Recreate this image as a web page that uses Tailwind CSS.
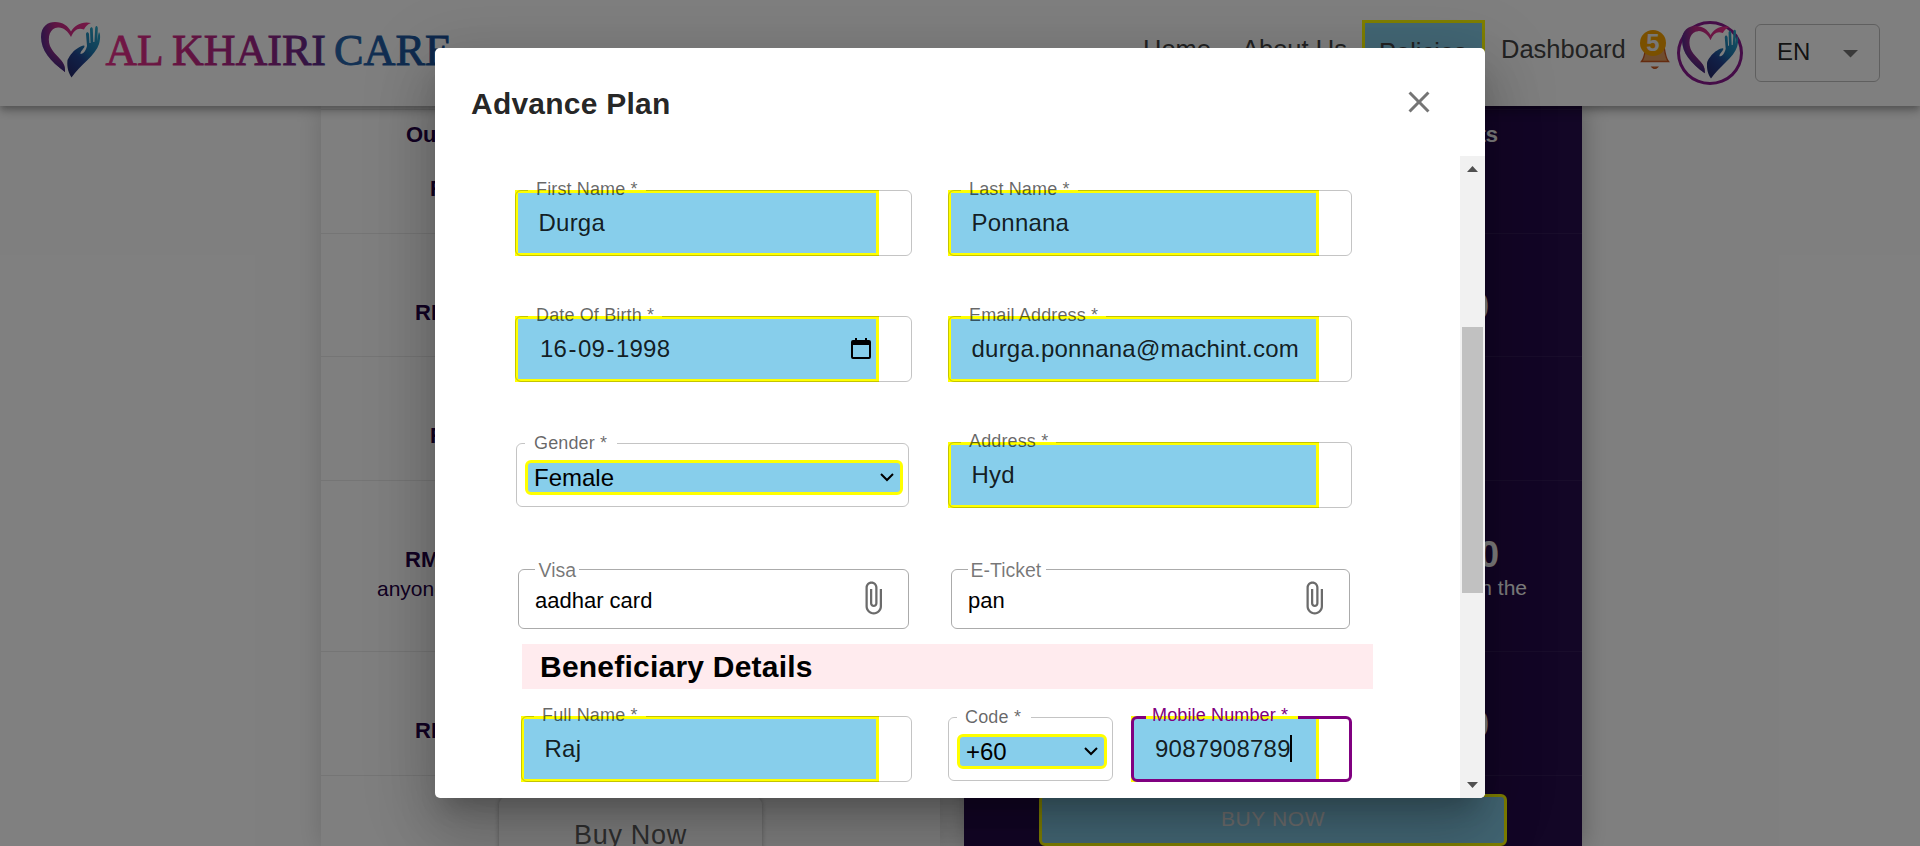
<!DOCTYPE html>
<html lang="en">
<head>
<meta charset="utf-8">
<title>Al Khairi Care</title>
<script src="https://cdn.jsdelivr.net/npm/@tailwindcss/browser@4"></script>
</head>
<body class="relative h-[846px] w-[1920px] overflow-hidden bg-white font-['Liberation_Sans',Arial,sans-serif]">

<svg class="absolute size-0" aria-hidden="true">
  <defs>
    <linearGradient id="heart" x1="0" y1="0.2" x2="1" y2="0.1">
      <stop offset="0" stop-color="#5a2a8c"/><stop offset=".3" stop-color="#c02a86"/><stop offset="1" stop-color="#f0308c"/>
    </linearGradient>
    <linearGradient id="heartlow" x1="0" y1="0" x2="0" y2="1">
      <stop offset=".45" stop-color="#3a2a86" stop-opacity="0"/><stop offset="1" stop-color="#2c2a7c"/>
    </linearGradient>
    <linearGradient id="hand" x1=".8" y1="0" x2=".2" y2="1">
      <stop offset="0" stop-color="#2aa6c8"/><stop offset=".4" stop-color="#1d78b0"/><stop offset=".65" stop-color="#22418f"/><stop offset="1" stop-color="#242a6c"/>
    </linearGradient>
    <linearGradient id="word" gradientUnits="userSpaceOnUse" x1="0" y1="0" x2="350" y2="0">
      <stop offset="0" stop-color="#e8308c"/><stop offset=".2" stop-color="#cf2882"/><stop offset=".45" stop-color="#9c2486"/><stop offset=".63" stop-color="#5a2a86"/><stop offset=".65" stop-color="#2a66ac"/><stop offset="1" stop-color="#1c4f98"/>
    </linearGradient>
    <symbol id="mark" viewBox="41 21 60 57" preserveAspectRatio="none">
      <path fill="url(#heart)" d="M65 72C50 61 41 50 41 37 41 26 48 22 55 22 63 22 68 26 71 31.500 75 25 82 21 91 23 87 24.500 85 27 84 29.500 78 27 74 30 71 37 68 31 63 27 58 27.500 50 28 47 37 50 46 53 53 60 58 63 63 65 66 65 69 65 72Z"/>
      <path fill="url(#heartlow)" d="M65 72C50 61 41 50 41 37 41 26 48 22 55 22 63 22 68 26 71 31.500 75 25 82 21 91 23 87 24.500 85 27 84 29.500 78 27 74 30 71 37 68 31 63 27 58 27.500 50 28 47 37 50 46 53 53 60 58 63 63 65 66 65 69 65 72Z"/>
      <path fill="url(#hand)" d="M71.500 77.500C67 71 67 64 67.500 60 70 55 74 50 78 48 81 46 84 45 84.500 46 85 48 80 51 80.500 54 84 54 86 50 87 46L86 34C86.300 31.500 88.500 31.500 89 34L89.500 43 90.500 43 90 29C90.500 26.500 92.600 26.500 92.800 29L93.300 42 94.400 42 95.200 28C95.700 25 97.800 25.500 97.800 28.500L97.300 41C98 37 98 34 99 32 100.500 34 100.500 39 99 44 96 55 80 65 71.500 77.500Z"/>
    </symbol>
    <symbol id="clip" viewBox="0 0 24 24">
      <path d="M16.500 6v11.500c0 2.210-1.790 4-4 4s-4-1.790-4-4V5c0-1.380 1.120-2.500 2.500-2.500s2.500 1.120 2.500 2.500v10.500c0 .55-.45 1-1 1s-1-.45-1-1V6H10v9.500c0 1.380 1.120 2.500 2.500 2.500s2.500-1.120 2.500-2.500V5c0-2.210-1.790-4-4-4S7 2.790 7 5v12.500c0 3.040 2.460 5.500 5.500 5.500s5.500-2.460 5.500-5.500V6h-1.500z"/>
    </symbol>
  </defs>
</svg>

<!-- Site header -->
<header class="relative z-10 flex h-[106px] items-start bg-white shadow-[0_3px_6px_-1px_rgba(0,0,0,0.2),0_6px_8px_0_rgba(0,0,0,0.14),0_2px_15px_0_rgba(0,0,0,0.12)]">
  <div class="flex pt-[21px] pl-[41px]">
    <svg class="h-[57px] w-[60px]"><use href="#mark"/></svg>
    <svg class="h-[57px] w-[360px]" viewBox="0 0 360 57" font-family="Liberation Serif" font-size="44" fill="url(#word)" stroke="url(#word)" stroke-width=".9"><text x="4.500" y="43.500" textLength="58" lengthAdjust="spacingAndGlyphs">AL</text><text x="71" y="43.500" textLength="154" lengthAdjust="spacingAndGlyphs">KHAIRI</text><text x="233" y="43.500" textLength="118" lengthAdjust="spacingAndGlyphs">CARE</text></svg>
  </div>
  <nav class="ml-[682px] flex text-[25.5px] leading-[30px] text-[#444]">
    <span class="mt-[34px] w-[99px] whitespace-nowrap">Home</span>
    <span class="mt-[34px] w-[120px] whitespace-nowrap">About Us</span>
    <span class="mt-5 h-[66px] w-[123px] border-[3px] border-[yellow] bg-[skyblue] pt-[14px] pl-[14px] whitespace-nowrap">Policies</span>
    <span class="mt-[34px] ml-4 w-[139px] whitespace-nowrap">Dashboard</span>
  </nav>
  <div class="relative mt-[30px] h-10 w-[30px]">
    <svg class="absolute inset-0" width="30" height="40" viewBox="0 0 30 40"><path d="M1.500 31.500C4.500 28 5 23 6 16H24C25 23 25.500 28 28.500 31.500Z" fill="#e09a5c" stroke="#c8561e" stroke-width="1.300"/><path d="M12 37q2.800 3 5.600 0z" fill="#e09a5c" stroke="#c8561e" stroke-width="1.200"/></svg>
    <span class="absolute top-0 left-0 flex size-[26px] items-center justify-center rounded-full bg-[#f5a000] text-[24px] font-bold text-[#eee]">5</span>
  </div>
  <div class="mt-[21px] ml-[7px] flex h-16 w-[66px] items-start justify-center rounded-[50%] border-[3px] border-[#8a1a90] bg-white pt-px">
    <svg class="h-[54px] w-[57px]"><use href="#mark"/></svg>
  </div>
  <div class="mt-6 ml-3 flex h-[58px] w-[125px] items-center justify-between rounded-[6px] border border-black/25 pr-[21px] pb-[3px] pl-[21px] text-[24px] text-black/87">
    <span>EN</span>
    <svg class="mt-1" width="15" height="8" viewBox="0 0 15 8"><path d="M0 0h15L7.500 7.500z" fill="#757575"/></svg>
  </div>
</header>

<!-- Plan comparison cards -->
<main class="flex h-[740px] gap-6 pl-[321px] text-[22px] leading-8">
  <section class="w-[619px] bg-white font-bold text-[#240046] shadow-[0_0_24px_rgba(0,0,0,0.16)]">
    <div class="h-1 border-b border-black/8"></div>
    <div class="h-[124px] border-b border-black/8 pt-[9px]"><p class="pl-[85px]">Ou</p><p class="mt-[22px] pl-[109px]">R</p></div>
    <div class="h-[123px] border-b border-black/8 pt-[63px] pl-[94px]">RM</div>
    <div class="h-[124px] border-b border-black/8 pt-[63px] pl-[109px]">R</div>
    <div class="h-[171px] border-b border-black/8 pt-16"><p class="pl-[84px] leading-[30px]">RM</p><p class="pl-14 text-[21px] leading-7 font-normal">anyone</p></div>
    <div class="h-[124px] border-b border-black/8 pt-[63px] pl-[94px]">RM</div>
    <div class="mt-5 ml-[178px] h-[60px] w-[263px] rounded-[9px] pt-[23px] text-center text-[27px] leading-8 font-normal tracking-[.7px] text-[#606060] shadow-[0_0_5px_rgba(0,0,0,0.3)]">Buy Now</div>
  </section>
  <section class="w-[618px] bg-[#260d4c] text-right font-bold text-white shadow-[0_0_24px_rgba(0,0,0,0.3)]">
    <div class="h-1 border-b border-white/6"></div>
    <div class="h-[124px] border-b border-white/6 pt-[9px] pr-[84px]">Benefits</div>
    <div class="h-[123px] border-b border-white/6 pt-[57px] pr-[93px] text-[36px]">0</div>
    <div class="h-[124px] border-b border-white/6"></div>
    <div class="h-[171px] border-b border-white/6 pt-[59px]"><p class="pr-[83px] text-[36px] leading-[30px]">0</p><p class="mt-[4px] pr-[55px] text-[21px] leading-7 font-normal">on the</p></div>
    <div class="h-[124px] border-b border-white/6 pt-[57px] pr-[93px] text-[36px]">0</div>
    <div class="mt-[18px] ml-[75px] flex h-[52px] w-[468px] items-center justify-center rounded-[6px] border-[3px] border-[yellow] bg-[skyblue] pb-[3px] text-[21px] font-normal tracking-[.6px] text-[#e0e0e0]">BUY NOW</div>
  </section>
</main>

<div class="absolute inset-0 z-20 bg-black/50"></div>

<!-- Advance Plan dialog -->
<div class="absolute top-12 left-[435px] z-30 flex h-[750px] w-[1050px] flex-col overflow-hidden rounded-[5px] bg-white shadow-[0_17px_23px_-10px_rgba(0,0,0,0.2),0_36px_57px_5px_rgba(0,0,0,0.14),0_14px_69px_12px_rgba(0,0,0,0.12)]">
  <div class="flex h-[108px] items-start justify-between pt-9 pr-12 pl-9">
    <h2 class="mt-px text-[30px] leading-[38px] font-bold tracking-[.225px] text-black/87">Advance Plan</h2>
    <svg class="size-9" viewBox="0 0 24 24" fill="#757575"><path d="M19 6.410 17.590 5 12 10.590 6.410 5 5 6.410 10.590 12 5 17.590 6.410 19 12 13.410 17.590 19 19 17.590 13.410 12z"/></svg>
  </div>

  <div class="flex h-[642px]">
    <form class="w-[1025px] text-[24px] tracking-[.225px] text-black/87">
      <div class="grid grid-cols-[397px_404px] auto-rows-[66px] gap-x-9 gap-y-[60px] pt-[34px] pl-20">

        <div class="relative">
          <div class="flex h-full w-[364px] items-center border-[3px] border-[yellow] bg-[skyblue] pb-px pl-[20.5px]">Durga</div>
          <fieldset class="absolute inset-0 rounded-[6px] border border-black/23 pl-3"><legend class="h-0 w-[118px]"></legend></fieldset>
          <label class="absolute -top-[10.5px] left-[21px] text-[18px] leading-[18px] tracking-[.14px] text-black/60">First Name *</label>
        </div>
        <div class="relative">
          <div class="flex h-full w-[371px] items-center border-[3px] border-[yellow] bg-[skyblue] pb-px pl-[20.5px]">Ponnana</div>
          <fieldset class="absolute inset-0 rounded-[6px] border border-black/23 pl-3"><legend class="h-0 w-[117px]"></legend></fieldset>
          <label class="absolute -top-[10.5px] left-[21px] text-[18px] leading-[18px] tracking-[.14px] text-black/60">Last Name *</label>
        </div>

        <div class="relative">
          <div class="flex h-full w-[364px] items-center justify-between border-[3px] border-[yellow] bg-[skyblue] pr-[5px] pb-px pl-[22px]">
            <span class="flex gap-[1.3px]"><span>16</span><span>-</span><span>09</span><span>-</span><span>1998</span></span>
            <svg width="20" height="22" viewBox="0 0 20 22"><path d="M4 0h2v2h8V0h2v2h2a2 2 0 0 1 2 2v15a2 2 0 0 1-2 2H2a2 2 0 0 1-2-2V4a2 2 0 0 1 2-2h2zM2 7v12h16V7z" fill="#000"/></svg>
          </div>
          <fieldset class="absolute inset-0 rounded-[6px] border border-black/23 pl-3"><legend class="h-0 w-[134px]"></legend></fieldset>
          <label class="absolute -top-[10.5px] left-[21px] text-[18px] leading-[18px] tracking-[.14px] text-black/60">Date Of Birth *</label>
        </div>
        <div class="relative">
          <div class="flex h-full w-[371px] items-center border-[3px] border-[yellow] bg-[skyblue] pb-px pl-[20.5px]">durga.ponnana@machint.com</div>
          <fieldset class="absolute inset-0 rounded-[6px] border border-black/23 pl-3"><legend class="h-0 w-[145px]"></legend></fieldset>
          <label class="absolute -top-[10.5px] left-[21px] text-[18px] leading-[18px] tracking-[.14px] text-black/60">Email Address *</label>
        </div>

        <div class="relative mt-px ml-px h-16 w-[393px] pt-[17px] pr-[6px] pl-[9px]">
          <div class="flex h-[35px] items-center justify-between rounded-[6px] border-[3px] border-[yellow] bg-[skyblue] pr-[6px] pl-[6px] tracking-normal text-black">Female
            <svg width="14" height="9" viewBox="0 0 14 9"><path d="m1 1 6 6 6-6" fill="none" stroke="#000" stroke-width="2"/></svg></div>
          <fieldset class="absolute inset-0 rounded-[6px] border border-black/23 pl-2"><legend class="h-0 w-[92px]"></legend></fieldset>
          <label class="absolute -top-[9px] left-[18px] text-[18px] leading-[18px] tracking-[.14px] text-black/60">Gender *</label>
        </div>
        <div class="relative">
          <div class="flex h-full w-[371px] items-center border-[3px] border-[yellow] bg-[skyblue] pb-px pl-[20.5px]">Hyd</div>
          <fieldset class="absolute inset-0 rounded-[6px] border border-black/23 pl-3"><legend class="h-0 w-[95px]"></legend></fieldset>
          <label class="absolute -top-[10.5px] left-[21px] text-[18px] leading-[18px] tracking-[.14px] text-black/60">Address *</label>
        </div>

        <div class="relative mt-px ml-[3px] flex h-[60px] w-[391px] items-start justify-between pt-[11px] pr-[18px] pl-[17px]">
          <span class="mt-px text-[22px] leading-10 tracking-normal text-black">aadhar card</span>
          <svg class="size-9" fill="#6b6b6b"><use href="#clip"/></svg>
          <fieldset class="absolute inset-0 rounded-[6px] border border-black/33 pl-4"><legend class="h-0 w-11"></legend></fieldset>
          <label class="absolute -top-[8px] left-[20.5px] text-[19.5px] leading-[18px] tracking-normal text-black/54">Visa</label>
        </div>
        <div class="relative mt-px ml-[3px] flex h-[60px] w-[399px] items-start justify-between pt-[11px] pr-[18px] pl-[17px]">
          <span class="mt-px text-[22px] leading-10 tracking-normal text-black">pan</span>
          <svg class="size-9" fill="#6b6b6b"><use href="#clip"/></svg>
          <fieldset class="absolute inset-0 rounded-[6px] border border-black/33 pl-4"><legend class="h-0 w-[78px]"></legend></fieldset>
          <label class="absolute -top-[8px] left-[19.5px] text-[19.5px] leading-[18px] tracking-normal text-black/54">E-Ticket</label>
        </div>
      </div>

      <h3 class="mt-[10px] ml-[87px] h-[45px] w-[851px] bg-[#ffebee] pl-[18px] text-[30px] leading-[45px] font-bold text-black">Beneficiary Details</h3>

      <div class="mt-[27px] flex pl-[86px]">
        <div class="relative h-[66px] w-[391px]">
          <div class="flex h-full w-[358px] items-center border-[3px] border-[yellow] bg-[skyblue] pb-px pl-[20.5px]">Raj</div>
          <fieldset class="absolute inset-0 rounded-[6px] border border-black/23 pl-3"><legend class="h-0 w-[112px]"></legend></fieldset>
          <label class="absolute -top-[10.5px] left-[21px] text-[18px] leading-[18px] tracking-[.14px] text-black/60">Full Name *</label>
        </div>
        <div class="relative mt-px ml-9 h-16 w-[165px] pt-[17px] pr-[6px] pl-[9px]">
          <div class="flex h-[35px] items-center justify-between rounded-[6px] border-[3px] border-[yellow] bg-[skyblue] pr-[6px] pl-[6px] tracking-normal text-black">+60
            <svg width="14" height="9" viewBox="0 0 14 9"><path d="m1 1 6 6 6-6" fill="none" stroke="#000" stroke-width="2"/></svg></div>
          <fieldset class="absolute inset-0 rounded-[6px] border border-black/23 pl-2"><legend class="h-0 w-[74px]"></legend></fieldset>
          <label class="absolute -top-[9px] left-[17px] text-[18px] leading-[18px] tracking-[.17px] text-black/60">Code *</label>
        </div>
        <div class="relative ml-[18px] h-[66px] w-[221px]">
          <div class="flex h-full w-[188px] items-center border-[3px] border-[yellow] bg-[skyblue] pb-px pl-[21px]">9087908789<span class="-ml-px h-[27px] w-[2px] bg-black"></span></div>
          <fieldset class="absolute inset-0 rounded-[6px] border-[3px] border-[purple] pl-3"><legend class="h-0 w-[152px]"></legend></fieldset>
          <label class="absolute -top-[10.5px] left-[21px] text-[18px] leading-[18px] tracking-[.14px] text-[purple]">Mobile Number *</label>
        </div>
      </div>
    </form>

    <!-- Scrollbar -->
    <div class="flex w-[25px] flex-col items-center bg-[#f1f1f1]">
      <svg class="mt-[10px]" width="11" height="6" viewBox="0 0 11 6"><path d="M0 6 5.500 0 11 6z" fill="#505050"/></svg>
      <div class="mt-[155px] h-[266px] w-[21px] bg-[#c1c1c1]"></div>
      <svg class="mt-[189px]" width="11" height="6" viewBox="0 0 11 6"><path d="M0 0h11L5.500 6z" fill="#505050"/></svg>
    </div>
  </div>
</div>
</body>
</html>
